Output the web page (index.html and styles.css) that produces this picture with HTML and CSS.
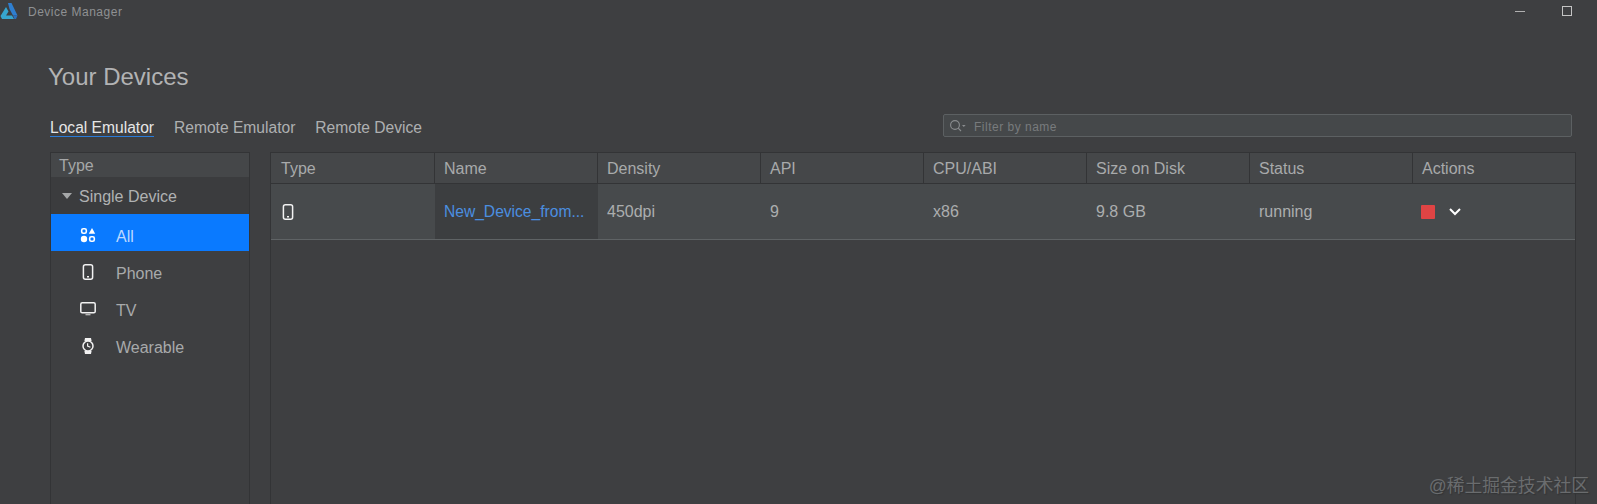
FILE: index.html
```html
<!DOCTYPE html>
<html lang="en">
<head>
<meta charset="utf-8">
<title>Device Manager</title>
<link rel="stylesheet" href="styles.css">
</head>
<body>
<div class="app">
  <header class="titlebar">
    <div class="brand">
      <svg class="logo" width="20" height="18" viewBox="0 0 20 18">
        <path d="M8 1 L11.5 1 L17.5 13.5 L13 13.5 L9.5 7 Z" fill="#2f7fd0"/>
        <path d="M6 5 L8.5 9.5 L6 13.5 L12 13.5 L14 17 L2 17 L0.5 14 Z" fill="#37a6cf"/>
        <path d="M13 13.5 L17.5 13.5 L16 17 L14.4 17 Z" fill="#2a6fc0"/>
      </svg>
      <span class="app-name">Device Manager</span>
    </div>
    <div class="win-controls">
      <span class="win-min"></span>
      <span class="win-max"></span>
    </div>
  </header>

  <main class="content">
    <h1 class="heading">Your Devices</h1>
    <div class="toolbar">
      <nav class="tabs">
        <span class="tab tab-active">Local Emulator</span>
        <span class="tab">Remote Emulator</span>
        <span class="tab">Remote Device</span>
      </nav>
      <div class="filter">
        <svg width="18" height="14" viewBox="0 0 18 14" fill="none" stroke="#8a8d8f" stroke-width="1.1">
          <circle cx="6" cy="6" r="4.4"/>
          <path d="M9.2 9.2 L12 12"/>
          <path d="M13 6 L16.6 6 L14.8 8 Z" fill="#8a8d8f" stroke="none"/>
        </svg>
        <span class="filter-text">Filter by name</span>
      </div>
    </div>

    <div class="panels">
      <aside class="side">
        <div class="side-head">Type</div>
        <div class="side-group"><span class="caret"></span>Single Device</div>
        <div class="side-item side-selected">
          <svg class="side-icon" width="16" height="16" viewBox="0 0 16 16">
            <rect x="1.7" y="1.7" width="4.6" height="4.6" rx="1.6" fill="none" stroke="#fff" stroke-width="1.6"/>
            <path d="M12 1 L15.2 6.8 L8.8 6.8 Z" fill="#fff"/>
            <circle cx="4" cy="12" r="3.2" fill="#fff"/>
            <rect x="9.7" y="9.7" width="4.6" height="4.6" rx="1.6" fill="none" stroke="#fff" stroke-width="1.6"/>
          </svg>
          <span>All</span>
        </div>
        <div class="side-item">
          <svg class="side-icon" width="16" height="16" viewBox="0 0 16 16" fill="none" stroke="#f2f2f2" stroke-width="1.5">
            <rect x="3.4" y="0.8" width="9.2" height="14.4" rx="2"/>
            <path d="M7 12.8 L9 12.8"/>
          </svg>
          <span>Phone</span>
        </div>
        <div class="side-item">
          <svg class="side-icon" width="16" height="16" viewBox="0 0 16 16" fill="none" stroke="#f2f2f2" stroke-width="1.5">
            <rect x="0.8" y="1.8" width="14.4" height="10" rx="1.4"/>
            <path d="M5.5 13.6 L10.5 13.6" stroke="#b5b5b5"/>
          </svg>
          <span>TV</span>
        </div>
        <div class="side-item">
          <svg class="side-icon" width="16" height="16" viewBox="0 0 16 16">
            <path d="M5 0 L11 0 L11.6 3 L4.4 3 Z M4.4 13 L11.6 13 L11 16 L5 16 Z" fill="#f2f2f2"/>
            <circle cx="8" cy="8" r="5" fill="#3e3f41" stroke="#f2f2f2" stroke-width="1.5"/>
            <path d="M7.6 5.2 L7.6 8 L10.4 9.2" fill="none" stroke="#f2f2f2" stroke-width="1.2"/>
          </svg>
          <span>Wearable</span>
        </div>
      </aside>

      <section class="table">
        <div class="row row-head">
          <div class="cell">Type</div>
          <div class="cell">Name</div>
          <div class="cell">Density</div>
          <div class="cell">API</div>
          <div class="cell">CPU/ABI</div>
          <div class="cell">Size on Disk</div>
          <div class="cell">Status</div>
          <div class="cell">Actions</div>
        </div>
        <div class="row row-data">
          <div class="cell">
            <svg width="16" height="16" viewBox="0 0 16 16" fill="none" stroke="#f2f2f2" stroke-width="1.5">
              <rect x="3.4" y="0.8" width="9.2" height="14.4" rx="2"/>
              <path d="M7 12.8 L9 12.8"/>
            </svg>
          </div>
          <div class="cell cell-name">New_Device_from...</div>
          <div class="cell">450dpi</div>
          <div class="cell">9</div>
          <div class="cell">x86</div>
          <div class="cell">9.8 GB</div>
          <div class="cell">running</div>
          <div class="cell cell-actions">
            <span class="stop"></span>
            <svg width="14" height="10" viewBox="0 0 14 10" fill="none" stroke="#fff" stroke-width="2">
              <path d="M2 2 L7 7 L12 2"/>
            </svg>
          </div>
        </div>
      </section>
    </div>
  </main>
</div>
<div class="watermark">@稀土掘金技术社区</div>
</body>
</html>
```

FILE: styles.css
```css
html, body {
  margin: 0;
  height: 504px;
  overflow: hidden;
  background: #3e3f41;
}

body {
  position: relative;
  font-family: "Liberation Sans", Arial, sans-serif;
  color: #b0b2b3;
}

.app {
  display: flex;
  flex-direction: column;
  height: 504px;
}

.titlebar {
  display: flex;
  justify-content: space-between;
  align-items: center;
  height: 22px;
  flex: none;
}

.brand {
  display: flex;
  align-items: center;
}

.logo {
  margin-top: 0;
}

.app-name {
  margin-left: 8px;
  padding-top: 2px;
  font-size: 12px;
  letter-spacing: 0.5px;
  color: #8f9193;
}

.win-controls {
  display: flex;
  align-items: center;
  gap: 37px;
  padding-right: 25px;
}

.win-min {
  width: 10px;
  height: 1px;
  background: #b0b0b0;
}

.win-max {
  width: 8px;
  height: 8px;
  border: 1px solid #c4c4c4;
}

.content {
  flex: 1;
  display: flex;
  flex-direction: column;
  min-height: 0;
  padding: 0 21px 0 50px;
}

.heading {
  margin: 41px 0 0 -2px;
  font-size: 24px;
  line-height: 28px;
  font-weight: 400;
  color: #b2b3b4;
}

.toolbar {
  display: flex;
  justify-content: space-between;
  align-items: flex-start;
  margin-top: 23px;
  height: 24px;
}

.tabs {
  display: flex;
  gap: 20px;
  padding-top: 5px;
}

.tab {
  font-size: 15.6px;
  line-height: 17px;
  color: #aeb0b1;
  border-bottom: 1px solid transparent;
}

.tab-active {
  color: #e6e6e6;
  border-bottom-color: #2a7bd8;
}

.filter {
  display: flex;
  align-items: center;
  box-sizing: border-box;
  width: 629px;
  height: 23px;
  margin-right: 4px;
  padding-left: 5px;
  background: #45484a;
  border: 1px solid #5c6062;
  border-radius: 2px;
}

.filter-text {
  margin-left: 7px;
  padding-top: 3px;
  font-size: 12px;
  letter-spacing: 0.5px;
  color: #787b7d;
}

.panels {
  flex: 1;
  display: flex;
  gap: 20px;
  margin-top: 14px;
  min-height: 0;
}

.side {
  box-sizing: border-box;
  width: 200px;
  flex: none;
  border: 1px solid #333436;
  border-bottom: 0;
}

.side-head {
  box-sizing: border-box;
  height: 24px;
  line-height: 24px;
  padding: 1px 0 0 8px;
  font-size: 16px;
  color: #a5a7a8;
  background: #454749;
}

.side-group {
  box-sizing: border-box;
  display: flex;
  align-items: center;
  height: 37px;
  padding: 3px 0 0 11px;
  font-size: 16px;
  background: #3b3c3e;
}

.caret {
  width: 0;
  height: 0;
  margin-right: 7px;
  margin-top: -3px;
  border-left: 5px solid transparent;
  border-right: 5px solid transparent;
  border-top: 6px solid #a5a7a8;
}

.side-item {
  box-sizing: border-box;
  display: flex;
  align-items: center;
  height: 37px;
  padding: 9px 0 0 29px;
  font-size: 16px;
  color: #a8aaab;
}

.side-selected {
  background: #0a7aff;
  color: #bcd8ff;
}

.side-icon {
  flex: none;
  margin: -5px 20px 0 0;
}

.table {
  flex: 1;
  min-width: 0;
  border: 1px solid #333436;
  border-bottom: 0;
}

.row {
  display: grid;
  grid-template-columns: 164px repeat(7, 163px);
}

.row-head {
  height: 30px;
  background: #454749;
  border-bottom: 1px solid #333436;
}

.row-head .cell {
  display: flex;
  align-items: center;
  box-sizing: border-box;
  padding: 1px 0 0 9px;
  font-size: 16px;
  color: #a8aaab;
  border-right: 1px solid #333436;
}

.row-head .cell:first-child {
  padding-left: 10px;
}

.row-head .cell:last-child {
  border-right: 0;
}

.row-data {
  height: 55px;
  background: #474a4c;
  border-bottom: 1px solid #5f6365;
}

.row-data .cell {
  display: flex;
  align-items: center;
  padding-left: 9px;
  font-size: 16px;
  color: #acaeaf;
}

.row-data .cell-name {
  background: #3c3e40;
  color: #4b8fe0;
  font-size: 15.6px;
}

.row-data .cell-actions {
  gap: 13px;
  padding-left: 8px;
}

.stop {
  width: 14px;
  height: 14px;
  background: #e04444;
  border-radius: 1px;
}

.watermark {
  position: absolute;
  right: 8px;
  bottom: 7px;
  font-family: "Liberation Sans", "Noto Sans CJK SC", sans-serif;
  font-size: 17.8px;
  line-height: 22px;
  color: #6a6c6e;
  text-shadow: 1px 1px 1px #333436;
}
```
